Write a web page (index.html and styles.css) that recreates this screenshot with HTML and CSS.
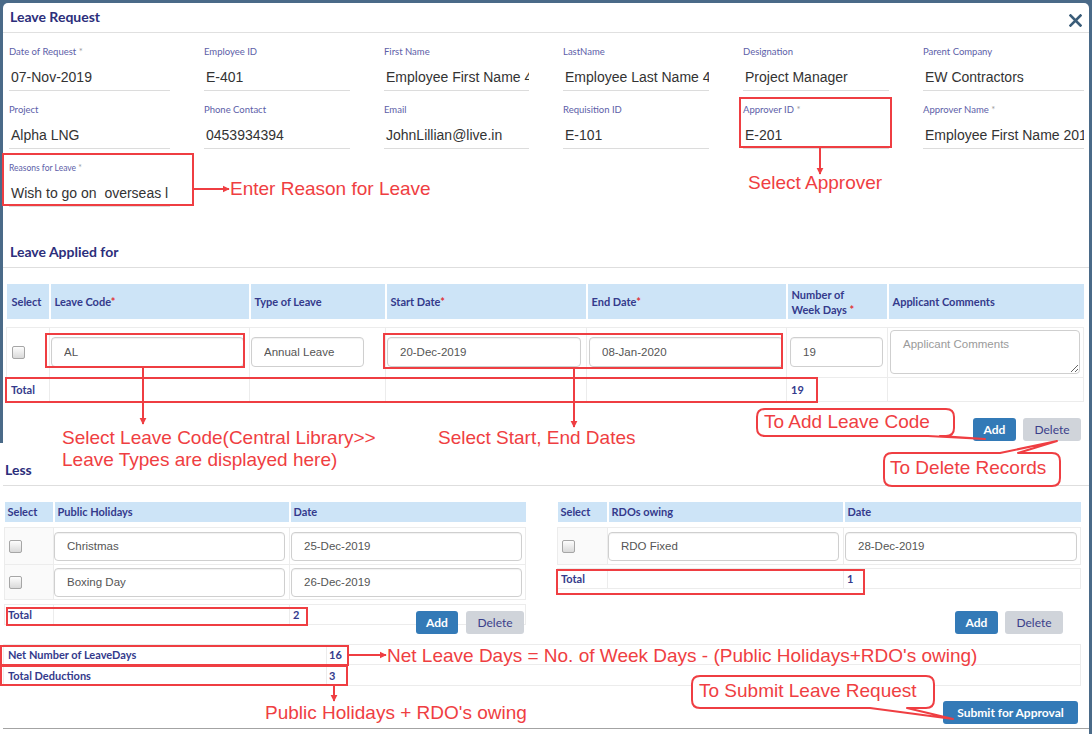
FILE: index.html
```html
<!DOCTYPE html>
<html>
<head>
<meta charset="utf-8">
<title>Leave Request</title>
<link rel="stylesheet" href="styles.css">
</head>
<body>
<div class="modal">
  <div class="modal-inner">
    <div class="modal-header">
      <h1 class="modal-title">Leave Request</h1>
      <span class="close"><svg width="13" height="13" viewBox="0 0 13 13"><path d="M1.5 1.5 L11.5 11.5 M11.5 1.5 L1.5 11.5" stroke="#3b5d79" stroke-width="2.6" stroke-linecap="square"/></svg></span>
    </div>

    <div class="form-grid">
      <div class="field"><div class="f-label">Date of Request <span class="req">*</span></div><div class="f-value">07-Nov-2019</div></div>
      <div class="field"><div class="f-label">Employee ID</div><div class="f-value">E-401</div></div>
      <div class="field"><div class="f-label">First Name</div><div class="f-value">Employee First Name 4</div></div>
      <div class="field"><div class="f-label">LastName</div><div class="f-value">Employee Last Name 4</div></div>
      <div class="field"><div class="f-label">Designation</div><div class="f-value">Project Manager</div></div>
      <div class="field"><div class="f-label">Parent Company</div><div class="f-value">EW Contractors</div></div>

      <div class="field"><div class="f-label">Project</div><div class="f-value">Alpha LNG</div></div>
      <div class="field"><div class="f-label">Phone Contact</div><div class="f-value">0453934394</div></div>
      <div class="field"><div class="f-label">Email</div><div class="f-value">JohnLillian@live.in</div></div>
      <div class="field"><div class="f-label">Requisition ID</div><div class="f-value">E-101</div></div>
      <div class="field"><div class="f-label">Approver ID <span class="req">*</span></div><div class="f-value">E-201</div></div>
      <div class="field"><div class="f-label">Approver Name <span class="req">*</span></div><div class="f-value">Employee First Name 201</div></div>

      <div class="field reason"><div class="f-label small">Reasons for Leave <span class="req">*</span></div><div class="f-value">Wish to go on&nbsp; overseas l</div></div>
    </div>

    <h2 class="section-head">Leave Applied for</h2>

    <table class="dtable leave-table">
      <colgroup><col class="lc1"><col class="lc2"><col class="lc3"><col class="lc4"><col class="lc5"><col class="lc6"><col class="lc7"></colgroup>
      <tr class="hrow">
        <th>Select</th>
        <th>Leave Code<span class="star">*</span></th>
        <th>Type of Leave</th>
        <th>Start Date<span class="star">*</span></th>
        <th>End Date<span class="star">*</span></th>
        <th>Number of<br>Week Days <span class="star">*</span></th>
        <th>Applicant Comments</th>
      </tr>
      <tr class="gap"><td></td><td></td><td></td><td></td><td></td><td></td><td></td></tr>
      <tr class="brow">
        <td class="cbcell"><span class="cb"></span></td>
        <td><input class="inp" type="text" value="AL" readonly></td>
        <td><input class="inp inp-type" type="text" value="Annual Leave" readonly></td>
        <td><input class="inp" type="text" value="20-Dec-2019" readonly></td>
        <td class="pl2"><input class="inp" type="text" value="08-Jan-2020" readonly></td>
        <td class="pl3"><input class="inp" type="text" value="19" readonly></td>
        <td class="pl2"><textarea class="ta" placeholder="Applicant Comments" readonly></textarea></td>
      </tr>
      <tr class="trow">
        <td class="tot">Total</td><td></td><td></td><td></td><td></td><td class="tot">19</td><td></td>
      </tr>
    </table>

    <div class="btn-row main-btns">
      <button class="btn btn-add">Add</button>
      <button class="btn btn-del">Delete</button>
    </div>

    <h2 class="section-head less">Less</h2>

    <div class="sub-grid">
      <div class="sub-col">
        <table class="dtable sub-table">
          <colgroup><col class="sc1"><col class="sc2"><col class="sc3"></colgroup>
          <tr class="hrow"><th>Select</th><th>Public Holidays</th><th>Date</th></tr>
          <tr class="gap"><td></td><td></td><td></td></tr>
          <tr class="srow r1">
            <td class="cbcell"><span class="cb"></span></td>
            <td class="namecell"><input class="inp sinp" type="text" value="Christmas" readonly></td>
            <td class="datecell"><input class="inp sinp" type="text" value="25-Dec-2019" readonly></td>
          </tr>
          <tr class="srow r2">
            <td class="cbcell"><span class="cb"></span></td>
            <td class="namecell"><input class="inp sinp" type="text" value="Boxing Day" readonly></td>
            <td class="datecell"><input class="inp sinp" type="text" value="26-Dec-2019" readonly></td>
          </tr>
          <tr class="gap g5"><td></td><td></td><td></td></tr>
          <tr class="trow small"><td class="tot">Total</td><td></td><td class="tot">2</td></tr>
        </table>
        <div class="btn-row left-btns">
          <button class="btn btn-add w42">Add</button>
          <button class="btn btn-del">Delete</button>
        </div>
      </div>
      <div class="sub-col">
        <table class="dtable sub-table sub-right">
          <colgroup><col class="rc1"><col class="rc2"><col class="rc3"></colgroup>
          <tr class="hrow"><th>Select</th><th>RDOs owing</th><th>Date</th></tr>
          <tr class="gap"><td></td><td></td><td></td></tr>
          <tr class="srow r1">
            <td class="cbcell"><span class="cb"></span></td>
            <td class="namecell"><input class="inp sinp" type="text" value="RDO Fixed" readonly></td>
            <td class="datecell"><input class="inp sinp" type="text" value="28-Dec-2019" readonly></td>
          </tr>
          <tr class="gap g4"><td></td><td></td><td></td></tr>
          <tr class="trow small"><td class="tot">Total</td><td></td><td class="tot">1</td></tr>
        </table>
        <div class="btn-row right-btns">
          <button class="btn btn-add">Add</button>
          <button class="btn btn-del">Delete</button>
        </div>
      </div>
    </div>

    <table class="dtable net-table">
      <colgroup><col class="nc1"><col class="nc2"></colgroup>
      <tr class="nrow1"><td class="tot">Net Number of LeaveDays</td><td class="tot v">16</td></tr>
      <tr class="nrow2"><td class="tot">Total Deductions</td><td class="tot v">3</td></tr>
    </table>

    <div class="btn-row submit-row">
      <button class="btn btn-add btn-submit">Submit for Approval</button>
    </div>
  </div>
</div>

<div class="notes">
  <svg class="ann" width="1092" height="734" viewBox="0 0 1092 734">
    <defs>
      <marker id="ah" viewBox="0 0 10 10" refX="9" refY="5" markerWidth="3.6" markerHeight="3.6" orient="auto">
        <path d="M0,0 L10,5 L0,10 z" fill="#ef3e42"/>
      </marker>
    </defs>
    <g fill="none" stroke="#ef3e42" stroke-width="2">
      <rect x="3" y="154" width="190" height="51"/>
      <rect x="740" y="98" width="151" height="49"/>
      <rect x="46" y="334" width="198" height="33"/>
      <rect x="384" y="334" width="398" height="34"/>
      <rect x="6" y="378" width="811" height="24"/>
      <rect x="7" y="608" width="300" height="17"/>
      <rect x="557" y="570" width="307" height="24"/>
      <rect x="1" y="646" width="347" height="19"/>
      <rect x="1" y="666" width="346" height="19"/>
      <line x1="194" y1="189" x2="229" y2="189" marker-end="url(#ah)"/>
      <line x1="820" y1="148" x2="820" y2="174" marker-end="url(#ah)"/>
      <line x1="143" y1="368" x2="143" y2="424" marker-end="url(#ah)"/>
      <line x1="574" y1="369" x2="574" y2="427" marker-end="url(#ah)"/>
      <line x1="349" y1="655" x2="386" y2="655" marker-end="url(#ah)"/>
      <line x1="334" y1="686" x2="334" y2="701" marker-end="url(#ah)"/>
    </g>
    <g fill="#fff" stroke="#ef3e42" stroke-width="2" stroke-linejoin="round">
      <path d="M765,409 H946 Q954,409 954,417 V428 Q954,436 946,436 H940 L985,439 L928,436 H765 Q757,436 757,428 V417 Q757,409 765,409 Z"/>
      <path d="M892,453 H1000 L1057,441 L1018,453 H1052 Q1060,453 1060,461 V478 Q1060,486 1052,486 H892 Q884,486 884,478 V461 Q884,453 892,453 Z"/>
      <path d="M700,676 H926 Q934,676 934,684 V700 Q934,708 926,708 H907 L953,719 L870,708 H700 Q692,708 692,700 V684 Q692,676 700,676 Z"/>
    </g>
  </svg>
  <div class="note n1">Enter Reason for Leave</div>
  <div class="note n2">Select Approver</div>
  <div class="note n3">Select Leave Code(Central Library&gt;&gt;<br>Leave Types are displayed here)</div>
  <div class="note n4">Select Start, End Dates</div>
  <div class="note n5">To Add Leave Code</div>
  <div class="note n6">To Delete Records</div>
  <div class="note n7">Net Leave Days = No. of Week Days - (Public Holidays+RDO's owing)</div>
  <div class="note n8">Public Holidays + RDO's owing</div>
  <div class="note n9">To Submit Leave Request</div>
</div>
</body>
</html>
```

FILE: styles.css
```css
* { box-sizing: border-box; }
html, body { margin: 0; padding: 0; }
body {
  width: 1092px;
  height: 734px;
  overflow: hidden;
  position: relative;
  background: linear-gradient(#fff, #fff) no-repeat 0 443px / 3px 291px, #4a6a88;
  font-family: Lato, "Open Sans", sans-serif;
}

.modal {
  margin: 3px 3px 0 3px;
  height: 731px;
  background: #fff;
  border-radius: 5px 5px 0 0;
}
.modal-inner {
  height: 726px;
  border-bottom: 1px solid #a3a3a3;
}

/* header */
.modal-header {
  height: 30px;
  border-bottom: 1px solid #e0e0e0;
  display: flex;
  align-items: center;
  justify-content: space-between;
  padding: 0 7px 3px 7px;
}
.modal-title {
  margin: 0;
  font-size: 14px;
  font-weight: 700;
  color: #2c2e7b;
}
.close { display: flex; margin-top: 8px; }

/* form */
.form-grid {
  display: grid;
  grid-template-columns: 161px 146px 145px 146px 146px 161px;
  column-gap: 34px;
  padding: 13px 0 0 6px;
}
.field { margin-bottom: 13px; min-width: 0; }
.f-label {
  font-size: 9.5px;
  line-height: 12px;
  color: #5d60a8;
  white-space: nowrap;
}
.f-label.small { font-size: 8.5px; }
.f-label .req { color: #a0a0a0; }
.f-value {
  margin-top: 6px;
  height: 27px;
  border-bottom: 1px solid #dcdcdc;
  font: 14px "Liberation Sans", Arial, sans-serif;
  line-height: 26px;
  color: #333;
  padding-left: 2px;
  white-space: nowrap;
  overflow: hidden;
}

.section-head {
  margin: 17px 0 0 0;
  height: 31px;
  line-height: 30px;
  border-bottom: 1px solid #dedede;
  padding-left: 7px;
  font-size: 14px;
  font-weight: 700;
  color: #2c2e7b;
}
.section-head.less { margin-top: 14px; padding-left: 2px; }

/* tables */
.dtable {
  border-collapse: collapse;
  table-layout: fixed;
}
.dtable th {
  background: #cde4f7;
  color: #343a8c;
  font-size: 11px;
  font-weight: 700;
  text-align: left;
  line-height: 15px;
  padding: 0 4px;
  border-left: 2px solid #fff;
}
.dtable th:first-child { border-left: 0; padding-left: 5px; }
.dtable td {
  border: 1px solid #ececec;
  padding: 0 5px 0 1px;
  vertical-align: middle;
}
.star { color: #e0343a; }

.gap td { height: 8px; border-left-color: #fff; border-right-color: #fff; border-top: 0; }

.leave-table { width: 1077px; margin: 16px 0 0 3px; }
.leave-table .lc1 { width: 43px; }
.leave-table .lc2 { width: 200px; }
.leave-table .lc3 { width: 136px; }
.leave-table .lc4 { width: 201px; }
.leave-table .lc5 { width: 200px; }
.leave-table .lc6 { width: 101px; }
.leave-table .lc7 { width: 196px; }
.leave-table .hrow th { height: 35px; }
.brow td { height: 50px; }
.trow td { height: 24px; }
.dtable td.cbcell { padding-left: 5px; }
.dtable td.pl2 { padding-left: 2px; padding-right: 3px; }
.dtable td.pl3 { padding-left: 3px; padding-right: 4px; }

.tot {
  font-size: 11px;
  font-weight: 700;
  color: #343a8c;
}
.dtable td.tot { padding-left: 4px; }

.cb {
  display: block;
  width: 13px;
  height: 13px;
  border: 1px solid #a6a6a6;
  border-radius: 2px;
  background: linear-gradient(#fdfdfd, #d9d9d9);
}

.inp {
  display: block;
  width: 100%;
  height: 30px;
  margin: 0;
  border: 1px solid #cfcfcf;
  border-radius: 4px;
  padding: 0 12px;
  font: 11.5px "Liberation Sans", Arial, sans-serif;
  color: #555;
  background: #fff;
  box-shadow: inset 0 1px 1px rgba(0, 0, 0, .06);
  outline: none;
}
.inp-type { width: 113px; }
.ta {
  display: block;
  width: 100%;
  height: 44px;
  margin: 0;
  border: 1px solid #cfcfcf;
  border-radius: 4px;
  padding: 7px 12px;
  font: 11.5px "Liberation Sans", Arial, sans-serif;
  color: #555;
  outline: none;
}
.ta::placeholder { color: #9a9a9a; }

/* buttons */
.btn-row {
  display: flex;
  justify-content: flex-end;
  gap: 7px;
}
.btn {
  height: 23px;
  border: 0;
  border-radius: 3px;
  padding: 0;
  font: 700 12px Lato, sans-serif;
  cursor: pointer;
}
.btn-add { width: 43px; background: #337ab7; color: #fff; }
.btn-add.w42 { width: 42px; }
.btn-del { width: 58px; background: #d0d4da; color: #3b3f8a; font-weight: 400; }
.main-btns { margin-top: 16px; padding-right: 8px; }
.left-btns { margin-top: -14px; padding-right: 1px; gap: 8px; }
.right-btns { margin-top: 22px; padding-right: 17px; }
.btn-submit { width: 135px; }
.submit-row { margin-top: 15px; padding-right: 11px; }

/* less tables */
.sub-grid {
  display: grid;
  grid-template-columns: 521px 523px;
  column-gap: 32px;
  margin-top: 16px;
  padding-left: 1px;
}
.sub-table { width: 100%; }
.sub-table .sc1 { width: 49px; }
.sub-table .sc2 { width: 236px; }
.sub-table .sc3 { width: 236px; }
.sub-table .rc1 { width: 50px; }
.sub-table .rc2 { width: 236px; }
.sub-table .rc3 { width: 237px; }
.sub-table .hrow th { height: 20px; padding: 0 3px; }
.sub-table .hrow th:first-child { padding-left: 3px; }
.sub-table .gap td { height: 6px; }
.sub-table .gap.g5 td { height: 5px; }
.sub-table .gap.g4 td { height: 4px; }
.sub-table .r1 td { height: 37px; }
.sub-table .r2 td { height: 35px; }
.sub-table td.cbcell { padding-left: 4px; background: #fafafa; }
.sub-table td.namecell { padding: 0 4px 0 0; }
.sub-table td.datecell { padding: 0 3px 0 1px; }
.sub-table .trow td { height: 20px; }
.sub-table td.tot { padding-left: 3px; }
.sinp { height: 29px; }

.net-table { width: 1078px; margin-top: 10px; }
.net-table .nc1 { width: 323px; }
.net-table .nrow1 td { height: 20px; }
.net-table .nrow2 td { height: 21px; }
.net-table td.tot { padding-left: 4px; }
.net-table td.v { padding-left: 2px; }

/* annotation overlay */
.notes {
  position: absolute;
  left: 0;
  top: 0;
  width: 1092px;
  height: 734px;
  pointer-events: none;
}
.ann { position: absolute; left: 0; top: 0; }
.note {
  position: absolute;
  font: 19px "Liberation Sans", Arial, sans-serif;
  line-height: 22px;
  color: #ef3e42;
  white-space: nowrap;
}
.n1 { left: 230px; top: 178px; }
.n2 { left: 748px; top: 172px; }
.n3 { left: 62px; top: 427px; }
.n4 { left: 438px; top: 427px; }
.n5 { left: 764px; top: 411px; }
.n6 { left: 890px; top: 457px; }
.n7 { left: 387px; top: 645px; }
.n8 { left: 265px; top: 702px; }
.n9 { left: 699px; top: 680px; }
```
